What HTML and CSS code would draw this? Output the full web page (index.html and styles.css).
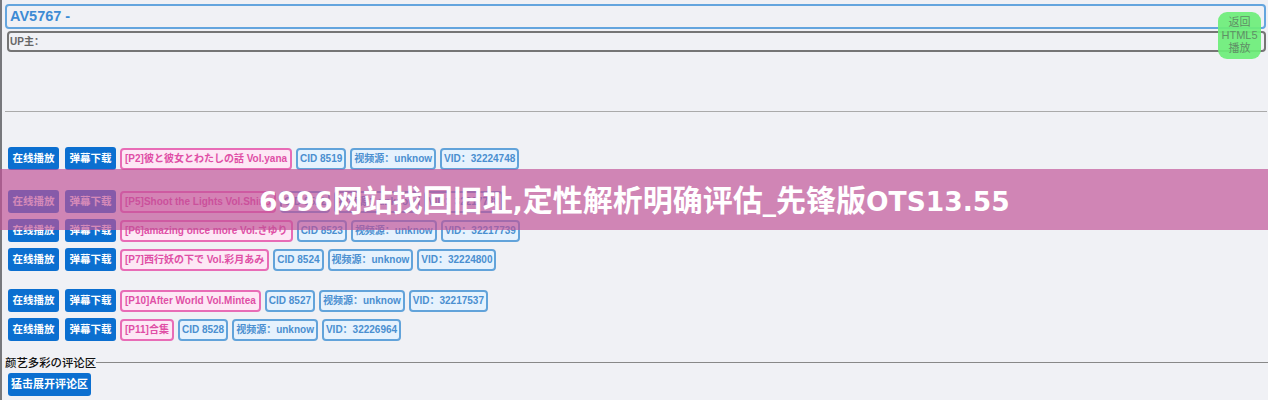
FILE: index.html
```html
<!DOCTYPE html>
<html lang="zh-CN">
<head>
    <meta charset="UTF-8">
    <title>AV5767</title>
    <link rel="stylesheet" href="styles.css">
</head>
<body>
    <div id="page">
        <div id="videoTitle">AV5767 -</div>
        <div id="upName">UP主：</div>
        <div id="backButton">返回<br>HTML5<br>播放</div>
        <hr id="topLine">

        <div class="group">
            <div class="part">
                <a class="btn btnPlay">在线播放</a><a class="btn">弹幕下载</a>
                <span class="tag pink">[P2]彼と彼女とわたしの話 Vol.yana</span>
                <span class="tag">CID 8519</span>
                <span class="tag">视频源：unknow</span>
                <span class="tag">VID：32224748</span>
            </div>
        </div>

        <div class="group group2">
            <div class="part">
                <a class="btn btnPlay">在线播放</a><a class="btn">弹幕下载</a>
                <span class="tag pink">[P5]Shoot the Lights Vol.Shino</span>
                <span class="tag">CID 8522</span>
                <span class="tag">视频源：unknow</span>
                <span class="tag">VID：32217738</span>
            </div>
            <div class="part">
                <a class="btn btnPlay">在线播放</a><a class="btn">弹幕下载</a>
                <span class="tag pink">[P6]amazing once more Vol.さゆり</span>
                <span class="tag">CID 8523</span>
                <span class="tag">视频源：unknow</span>
                <span class="tag">VID：32217739</span>
            </div>
            <div class="part">
                <a class="btn btnPlay">在线播放</a><a class="btn">弹幕下载</a>
                <span class="tag pink">[P7]西行妖の下で Vol.彩月あみ</span>
                <span class="tag">CID 8524</span>
                <span class="tag">视频源：unknow</span>
                <span class="tag">VID：32224800</span>
            </div>
        </div>

        <div class="group group3">
            <div class="part">
                <a class="btn btnPlay">在线播放</a><a class="btn">弹幕下载</a>
                <span class="tag pink">[P10]After World Vol.Mintea</span>
                <span class="tag">CID 8527</span>
                <span class="tag">视频源：unknow</span>
                <span class="tag">VID：32217537</span>
            </div>
            <div class="part">
                <a class="btn btnPlay">在线播放</a><a class="btn">弹幕下载</a>
                <span class="tag pink">[P11]合集</span>
                <span class="tag">CID 8528</span>
                <span class="tag">视频源：unknow</span>
                <span class="tag">VID：32226964</span>
            </div>
        </div>

        <div id="commentHead"><span>颜艺多彩の评论区</span></div>
        <a class="btn btnComment">猛击展开评论区</a>
    </div>

    <div id="banner">6996<span class="cjk">网站找回旧址</span>,<span class="cjk">定性解析明确评估</span>_<span class="cjk">先锋版</span>OTS13.55</div>
</body>
</html>
```

FILE: styles.css
```css
body {
    margin: 0;
    height: 400px;
    overflow: hidden;
    background-color: #f0f1f5;
    font-family: "Liberation Sans", "Noto Sans CJK SC", sans-serif;
}

#page {
    position: relative;
    height: 400px;
    box-sizing: border-box;
    padding: 4px 0 0 5px;
    border-left: 2px solid #77787c;
}

#videoTitle {
    height: 21px;
    line-height: 21px;
    margin: 0 2px 0 -2px;
    padding-left: 3px;
    border: 2px solid #64a5de;
    border-radius: 4px;
    color: #3d8bd4;
    font-size: 14.5px;
    font-weight: bold;
}

#upName {
    height: 17px;
    line-height: 17px;
    margin: 2px 2px 0 0;
    padding-left: 1px;
    border: 2px solid #757575;
    border-radius: 4px;
    color: #666;
    font-size: 10px;
    font-weight: bold;
}

#backButton {
    position: absolute;
    top: 12px;
    right: 7px;
    width: 43px;
    height: 47px;
    padding-top: 4px;
    box-sizing: border-box;
    background-color: rgba(108, 238, 120, 0.92);
    border-radius: 9px;
    color: #5f8f66;
    font-size: 11px;
    line-height: 13px;
    text-align: center;
}

#topLine {
    margin: 59px 1px 0 -2px;
    border: none;
    border-top: 1px solid #aaa;
}

.group {
    margin-top: 35px;
    margin-left: 1px;
}

.group2 {
    margin-top: 20px;
}

.group3 {
    margin-top: 18px;
}

.part {
    display: flex;
    align-items: center;
    gap: 4px;
    height: 23px;
    margin-bottom: 6px;
}

.group .part:last-child {
    margin-bottom: 0;
}

.btn {
    display: block;
    width: 51px;
    height: 23px;
    line-height: 23px;
    background-color: #0b6fd0;
    border-radius: 3px;
    color: #fff;
    font-size: 10.5px;
    font-weight: bold;
    text-align: center;
}

.btnPlay {
    margin-right: 2px;
}

.tag {
    height: 18px;
    line-height: 18px;
    padding: 0 2px;
    background-color: #e6f2fd;
    border: 2px solid #62a3da;
    border-radius: 4px;
    color: #4a8fd0;
    font-size: 10px;
    font-weight: bold;
    white-space: nowrap;
}

.pink {
    padding: 0 3px;
    background-color: #fde8f5;
    border-color: #e86cb6;
    color: #e04fa6;
}

#commentHead {
    display: flex;
    align-items: center;
    height: 12px;
    margin: 15px 0 0 -2px;
    color: #111;
    font-size: 11.4px;
    font-weight: 500;
}

#commentHead::after {
    content: "";
    flex: 1;
    border-top: 1px solid #888;
}

.btnComment {
    width: 83px;
    margin: 5px 0 0 1px;
    font-size: 11px;
}

#banner {
    position: absolute;
    top: 169px;
    left: 0;
    right: 0;
    height: 61px;
    padding-left: 259px;
    line-height: 64px;
    background-color: rgba(193, 81, 150, 0.68);
    color: #fff;
    font-family: "DejaVu Sans", "Noto Sans CJK SC", sans-serif;
    font-size: 26.5px;
    font-weight: bold;
}

.cjk {
    font-size: 30px;
}
```
